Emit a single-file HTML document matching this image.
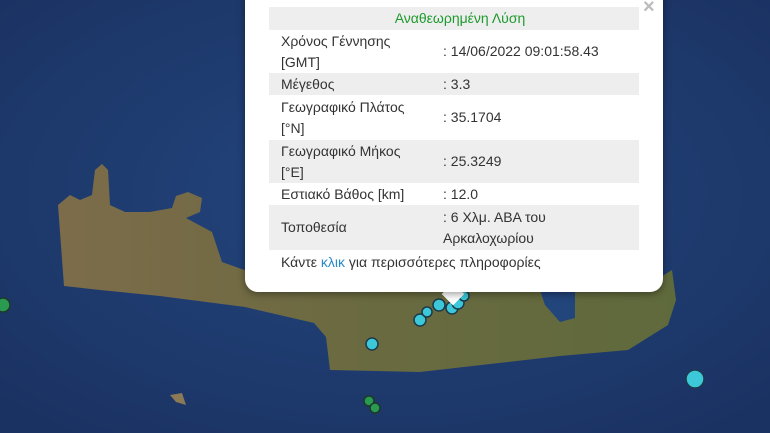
<!DOCTYPE html>
<html><head><meta charset="utf-8"><style>
body{margin:0;width:770px;height:433px;overflow:hidden;position:relative;background:#1d3868;font-family:"Liberation Sans",sans-serif}
svg{position:absolute;left:0;top:0}
.pop{position:absolute;left:245px;top:-14px;width:418px;height:306px;background:#fff;border-radius:13px;box-shadow:0 2px 8px rgba(0,0,0,.4)}
.tip{position:absolute;left:445px;top:286px;width:16px;height:16px;background:#fff;transform:rotate(45deg)}
table{position:absolute;left:24px;top:21px;width:370px;border-collapse:collapse;font-size:14px;color:#333}
td{padding:0 0 0 12px;line-height:21px;vertical-align:middle}
tr.g td{background:#eee}
.h td{text-align:center;color:#1e9a2e;height:23px}
.x{position:absolute;left:398px;top:10px;color:#bbb;font-size:20px;font-weight:bold}
.f{position:absolute;left:36px;top:268px;font-size:14px;color:#333}
.f span{color:#2a8ac8}
</style></head><body>
<svg width="770" height="433">
<defs><radialGradient id="s" cx="0.5" cy="0.45" r="0.7"><stop offset="0" stop-color="#24467e"/><stop offset="1" stop-color="#1a3262"/></radialGradient>
<linearGradient id="l" x1="0" x2="1"><stop offset="0" stop-color="#7d6c4a"/><stop offset="0.5" stop-color="#6a6a40"/><stop offset="1" stop-color="#5f6a3c"/></linearGradient></defs>
<rect width="770" height="433" fill="url(#s)"/>
<path d="M58,205 L70,195 L80,200 L92,195 L95,170 L102,164 L108,170 L110,205 L125,212 L150,212 L172,208 L176,196 L188,192 L202,198 L200,212 L186,218 L212,232 L222,262 L250,272 L300,282 L560,282 L600,285 L640,290 L672,270 L676,300 L668,325 L628,350 L560,356 L490,364 L420,372 L330,370 L326,337 L314,323 L245,307 L160,296 L100,290 L64,286 Z" fill="url(#l)"/>
<path d="M540,290 L575,288 L575,318 L560,322 L545,305 Z" fill="#22457c"/>
<path d="M170,395 L182,393 L186,405 L176,402 Z" fill="#8a7a55"/>
<g stroke="#1c3a4a" stroke-width="1.5" fill="#3cc8d8">
<circle cx="372" cy="344" r="6"/><circle cx="420" cy="320" r="6"/><circle cx="427" cy="312" r="5"/><circle cx="439" cy="305" r="6"/><circle cx="452" cy="308" r="6"/><circle cx="458" cy="303" r="6"/><circle cx="464" cy="296" r="5"/><circle cx="695" cy="379" r="9"/></g>
<g stroke="#1c3a2a" stroke-width="1.5" fill="#2a9a50"><circle cx="3" cy="305" r="7"/><circle cx="369" cy="401" r="5"/><circle cx="375" cy="408" r="5"/></g>
</svg>
<div class="tip"></div>
<div class="pop">
<div class="x">×</div>
<table>
<tr class="g h"><td colspan="2">Αναθεωρημένη Λύση</td></tr>
<tr><td style="height:43px;width:150px">Χρόνος Γέννησης<br>[GMT]</td><td>: 14/06/2022 09:01:58.43</td></tr>
<tr class="g"><td style="height:22px">Μέγεθος</td><td>: 3.3</td></tr>
<tr><td style="height:45px">Γεωγραφικό Πλάτος<br>[°N]</td><td>: 35.1704</td></tr>
<tr class="g"><td style="height:43px">Γεωγραφικό Μήκος<br>[°E]</td><td>: 25.3249</td></tr>
<tr><td style="height:22px">Εστιακό Βάθος [km]</td><td>: 12.0</td></tr>
<tr class="g"><td style="height:45px">Τοποθεσία</td><td>: 6 Χλμ. ΑΒΑ του<br>Αρκαλοχωρίου</td></tr>
</table>
<div class="f">Κάντε <span>κλικ</span> για περισσότερες πληροφορίες</div>
</div>
</body></html>
